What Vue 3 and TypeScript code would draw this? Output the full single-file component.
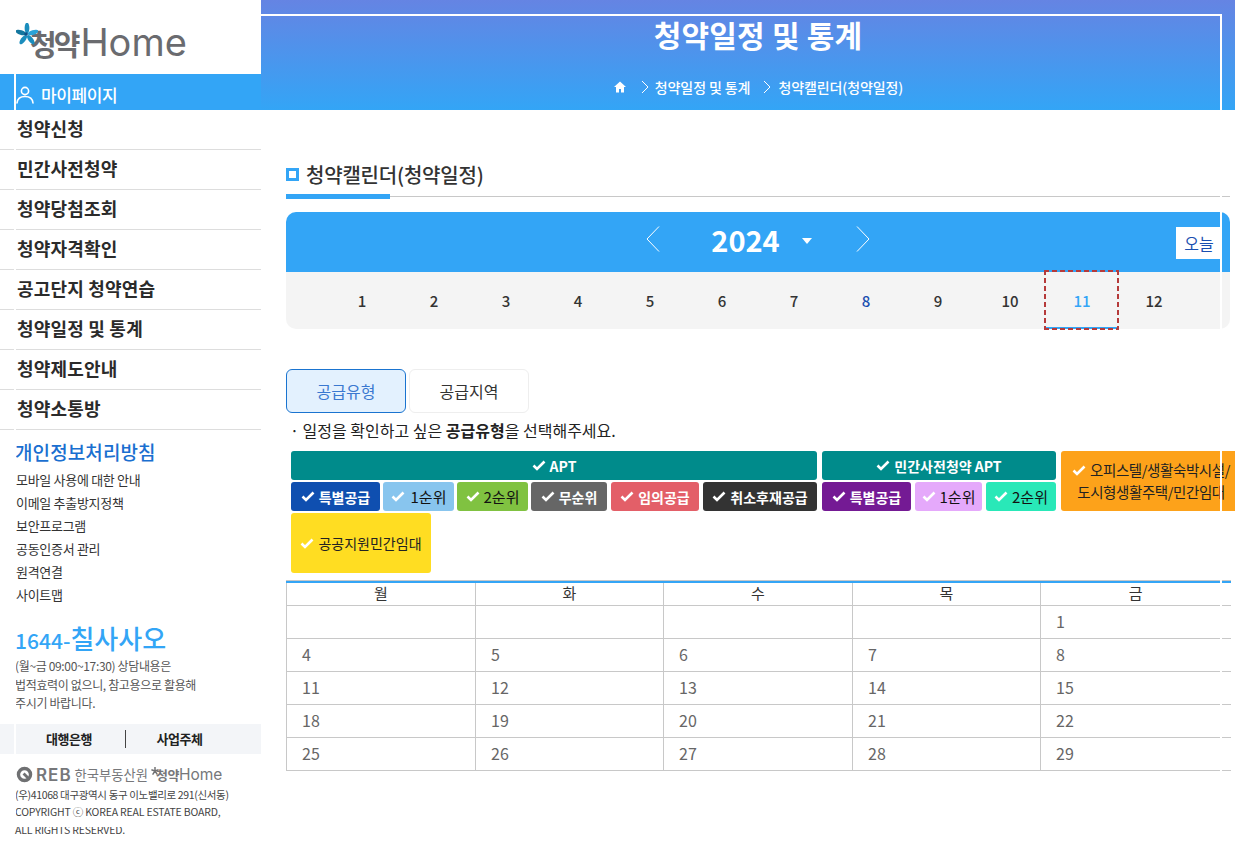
<script setup lang="ts">
interface Tag { label: string; cls: string }
const menu: string[] = ['청약신청', '민간사전청약', '청약당첨조회', '청약자격확인', '공고단지 청약연습', '청약일정 및 통계', '청약제도안내', '청약소통방']
const links: string[] = ['모바일 사용에 대한 안내', '이메일 추출방지정책', '보안프로그램', '공동인증서 관리', '원격연결', '사이트맵']
const months: number[] = [1, 2, 3, 4, 5, 6, 7, 8, 9, 10, 11, 12]
const aptTags: Tag[] = [
  { label: '특별공급', cls: 'c-blue w1' },
  { label: '1순위', cls: 'c-sky w2' },
  { label: '2순위', cls: 'c-green w2' },
  { label: '무순위', cls: 'c-gray w3' },
  { label: '임의공급', cls: 'c-red w4 mg' },
  { label: '취소후재공급', cls: 'c-dark w5 mg' }
]
const preTags: Tag[] = [
  { label: '특별공급', cls: 'c-purple w1' },
  { label: '1순위', cls: 'c-pink w6' },
  { label: '2순위', cls: 'c-mint w7' }
]
const days: string[] = ['월', '화', '수', '목', '금']
const rows: string[][] = [
  ['', '', '', '', '1'],
  ['4', '5', '6', '7', '8'],
  ['11', '12', '13', '14', '15'],
  ['18', '19', '20', '21', '22'],
  ['25', '26', '27', '28', '29']
]
</script>

<template>
  <div class="page">
    <aside class="side">
      <div class="logo">
        <svg class="star" viewBox="0 0 24 24" width="22" height="22">
          <g fill="#1b8dbd">
            <ellipse cx="12" cy="5.500" rx="2.600" ry="6" />
            <ellipse cx="12" cy="5.500" rx="2.600" ry="6" transform="rotate(72 12 12.500)" fill="#2aa3d8" />
            <ellipse cx="12" cy="5.500" rx="2.600" ry="6" transform="rotate(144 12 12.500)" />
            <ellipse cx="12" cy="5.500" rx="2.600" ry="6" transform="rotate(216 12 12.500)" />
            <ellipse cx="12" cy="5.500" rx="2.600" ry="6" transform="rotate(288 12 12.500)" fill="#14779f" />
          </g>
          <circle cx="11" cy="12" r="2" fill="#0f4f86" />
        </svg>
        <span class="logo-ko">청약</span><span class="logo-en">Home</span>
      </div>
      <div class="mypage">
        <svg viewBox="0 0 18 18" width="18" height="18" fill="none" stroke="#fff" stroke-width="1.600">
          <circle cx="9" cy="5" r="3.600" />
          <path d="M1 17c.4-4.400 3.600-6.500 8-6.500s7.600 2.100 8 6.500" stroke-linecap="round" />
        </svg>
        <span>마이페이지</span>
      </div>
      <ul class="menu">
        <li v-for="m in menu" :key="m">{{ m }}</li>
      </ul>
      <div class="policy">개인정보처리방침</div>
      <ul class="links">
        <li v-for="l in links" :key="l">{{ l }}</li>
      </ul>
      <div class="phone"><span class="p-num">1644-</span><span class="p-ko">칠사사오</span></div>
      <p class="note">(월~금 09:00~17:30) 상담내용은<br />법적효력이 없으니, 참고용으로 활용해<br />주시기 바랍니다.</p>
      <div class="bank">
        <span>대행은행</span>
        <i></i>
        <span>사업주체</span>
      </div>
      <div class="reb">
        <svg viewBox="0 0 18 18" width="17" height="17">
          <circle cx="9" cy="9" r="6.400" fill="none" stroke="#6f7072" stroke-width="3.600" />
          <path d="M8 8l5 5" stroke="#6f7072" stroke-width="3" />
        </svg>
        <span class="reb-en">REB</span>
        <span class="reb-ko">한국부동산원</span>
        <svg class="reb-star" viewBox="0 0 10 10" width="8" height="8">
          <path d="M5 0v5M5 5 .5 3.500M5 5l4.500-1.500M5 5 2 9.500M5 5l3 4.500" stroke="#6f7072" stroke-width="1.800" />
        </svg>
        <span class="reb-ko2">청약</span><span class="reb-home">Home</span>
      </div>
      <p class="addr">(우)41068 대구광역시 동구 이노밸리로 291(신서동)<br /><span class="latin">COPYRIGHT ⓒ KOREA REAL ESTATE BOARD,<br />ALL RIGHTS RESERVED.</span></p>
    </aside>

    <main class="main">
      <header class="hero">
        <h1>청약일정 및 통계</h1>
        <nav class="crumb">
          <svg viewBox="0 0 14 14" width="14" height="14"><path d="M7 1.500 1 7h2v5.500h3V9h2v3.500h3V7h2z" fill="#fff" /></svg>
          <svg class="gt first" viewBox="0 0 8 14" width="8" height="14"><path d="M1 1l6 6-6 6" fill="none" stroke="#fff" /></svg>
          <span>청약일정 및 통계</span>
          <svg class="gt second" viewBox="0 0 8 14" width="8" height="14"><path d="M1 1l6 6-6 6" fill="none" stroke="#fff" /></svg>
          <span>청약캘린더(청약일정)</span>
        </nav>
      </header>

      <section class="body">
        <h2 class="title"><i class="sq"></i>청약캘린더(청약일정)</h2>
        <div class="rule"><b></b></div>

        <div class="year-bar">
          <svg class="arrow" viewBox="0 0 14 26" width="14" height="26"><path d="M13 .5 1 13l12 12.500" fill="none" stroke="#fff" /></svg>
          <span class="year">2024</span>
          <i class="caret"></i>
          <svg class="arrow" viewBox="0 0 14 26" width="14" height="26"><path d="M1 .5 13 13 1 25.500" fill="none" stroke="#fff" /></svg>
          <button class="today">오늘</button>
        </div>
        <div class="months">
          <span v-for="n in months" :key="n" class="month" :class="{ sel: n === 11, eight: n === 8 }">{{ n }}</span>
        </div>

        <div class="tabs">
          <button class="tab on">공급유형</button>
          <button class="tab">공급지역</button>
        </div>
        <p class="guide">· 일정을 확인하고 싶은 <b>공급유형</b>을 선택해주세요.</p>

        <div class="tags">
          <div class="group g1">
            <div class="tag head"><svg class="ck" viewBox="0 0 14 11" width="14" height="11"><path d="M1.500 5.500 5 9l7.500-7.500" /></svg>APT</div>
            <div class="sub">
              <div v-for="t in aptTags" :key="t.label" class="tag" :class="t.cls"><svg class="ck" viewBox="0 0 14 11" width="14" height="11"><path d="M1.500 5.500 5 9l7.500-7.500" /></svg>{{ t.label }}</div>
            </div>
          </div>
          <div class="group g2">
            <div class="tag head"><svg class="ck" viewBox="0 0 14 11" width="14" height="11"><path d="M1.500 5.500 5 9l7.500-7.500" /></svg>민간사전청약 APT</div>
            <div class="sub">
              <div v-for="t in preTags" :key="t.label" class="tag" :class="t.cls"><svg class="ck" viewBox="0 0 14 11" width="14" height="11"><path d="M1.500 5.500 5 9l7.500-7.500" /></svg>{{ t.label }}</div>
            </div>
          </div>
          <div class="tag orange"><span><svg class="ck" viewBox="0 0 14 11" width="14" height="11"><path d="M1.500 5.500 5 9l7.500-7.500" /></svg>오피스텔/생활숙박시설/<br />도시형생활주택/민간임대</span></div>
        </div>
        <div class="tag yellow"><svg class="ck" viewBox="0 0 14 11" width="14" height="11"><path d="M1.500 5.500 5 9l7.500-7.500" /></svg>공공지원민간임대</div>

        <table class="cal">
          <thead>
            <tr><th v-for="d in days" :key="d">{{ d }}</th></tr>
          </thead>
          <tbody>
            <tr v-for="(r, i) in rows" :key="i">
              <td v-for="(c, j) in r" :key="j">{{ c }}</td>
            </tr>
          </tbody>
        </table>
      </section>
    </main>

    <div class="frame"></div>
  </div>
</template>

<style>
html, body { margin: 0; padding: 0; background: #fff; overflow: hidden; }
</style>

<style scoped>
.page {
  position: relative;
  display: flex;
  width: 1235px;
  height: 843px;
  overflow: hidden;
  background: #fff;
  color: #222;
  font-family: "Noto Sans CJK KR", "Noto Sans", sans-serif;
}
ul { list-style: none; margin: 0; padding: 0; }
p, h1, h2 { margin: 0; }

.side { width: 261px; flex: none; }
.logo { height: 74px; position: relative; display: flex; align-items: baseline; padding: 20px 0 0 30px; box-sizing: border-box; color: #6a6b6f; }
.star { position: absolute; left: 16px; top: 23px; }
.logo-ko { font-size: 29px; line-height: 44px; font-weight: 700; letter-spacing: -3px; margin-right: 3px; }
.logo-en { font-family: "Inter", sans-serif; font-size: 38px; line-height: 44px; }

.mypage { height: 36px; background: #33a5f6; color: #fff; display: flex; align-items: center; gap: 7px; padding: 5px 0 0 16px; box-sizing: border-box; font-size: 17px; font-weight: 500; letter-spacing: -.4px; }

.menu li { height: 40px; line-height: 37px; box-sizing: border-box; border-bottom: 1px solid #ddd; padding-left: 17px; font-size: 18px; font-weight: 700; letter-spacing: .2px; color: #2b2b2b; }

.policy { margin: 10px 0 0 15px; font-size: 19px; line-height: 24px; font-weight: 500; color: #1a6fd0; letter-spacing: .1px; }
.links { margin: 4px 0 0 16px; }
.links li { height: 23px; line-height: 23px; font-size: 13px; letter-spacing: -.3px; color: #333; }

.phone { margin: 16px 0 0 15px; color: #33a5f6; line-height: 32px; display: flex; align-items: baseline; font-weight: 500; }
.p-num { font-size: 21px; }
.p-ko { font-size: 26px; }
.note { margin: 1px 0 0 15px; font-size: 12px; line-height: 18.500px; color: #555; letter-spacing: -.35px; }

.bank { margin-top: 11px; height: 30px; background: #f3f5f8; display: flex; align-items: center; padding-left: 16px; font-size: 13px; font-weight: 700; letter-spacing: -.4px; color: #222; }
.bank span { width: 106px; text-align: center; }
.bank i { width: 1px; height: 18px; background: #444; margin-left: 3px; }
.bank span:last-child { width: 105px; margin-left: 1px; }

.reb { margin: 12px 0 0 16px; height: 18px; display: flex; align-items: center; color: #76777a; }
.reb-en { font-family: "Inter", sans-serif; font-size: 17px; letter-spacing: 1px; font-weight: 600; margin-left: 3px; }
.reb-ko { font-size: 13.300px; margin-left: 3px; }
.reb-star { margin: 0 -3px 8px 3px; flex: none; }
.reb-ko2 { font-size: 13px; font-weight: 700; letter-spacing: -.5px; }
.reb-home { font-family: "Inter", sans-serif; font-size: 15.500px; }

.addr { margin: 2px 0 0 15px; font-size: 10.500px; line-height: 17.500px; letter-spacing: -.35px; color: #444; white-space: nowrap; }
.latin { letter-spacing: -.18px; }

.main { flex: 1; min-width: 0; }
.hero { height: 110px; background: linear-gradient(#6584e3, #33a5f6); color: #fff; text-align: center; box-sizing: border-box; padding: 14px 0 0 20px; }
.hero h1 { font-size: 30px; line-height: 40px; font-weight: 700; letter-spacing: .2px; }
.crumb { margin-top: 23px; display: flex; justify-content: center; align-items: center; font-size: 14px; font-weight: 500; line-height: 20px; letter-spacing: -.1px; }
.gt.first { margin: 0 6px 0 14px; }
.gt.second { margin: 0 7px 0 13px; }

.body { padding: 0 5px 0 25px; }
.title { margin-top: 48px; height: 32px; display: flex; align-items: center; font-size: 20px; font-weight: 500; letter-spacing: -.2px; color: #333; }
.sq { width: 7px; height: 7px; border: 3px solid #33a5f6; margin-right: 7px; flex: none; }
.rule { margin-top: 4px; height: 5px; position: relative; }
.rule::before { content: ""; position: absolute; left: 0; right: 0; top: 2px; height: 1px; background: #c8c8c8; }
.rule b { position: absolute; left: 0; top: 0; width: 104px; height: 5px; background: #33a5f6; }

.year-bar { margin-top: 13px; height: 60px; background: #33a5f6; border-radius: 10px 10px 0 0; display: flex; align-items: center; justify-content: center; position: relative; color: #fff; padding-bottom: 6px; box-sizing: border-box; }
.year { font-size: 29px; font-weight: 700; line-height: 40px; margin: 0 0 0 51px; }
.caret { width: 0; height: 0; border: 5.500px solid transparent; border-top: 6px solid #fff; border-bottom: 0; margin: 4px 44px 0 22px; }
.arrow { flex: none; }
.today { position: absolute; left: 890px; top: 15px; width: 46px; height: 32px; border: 0; background: #fff; color: #1a4fb0; font: 400 16px "Noto Sans CJK KR", sans-serif; padding: 0; }

.months { height: 57px; background: #f4f4f4; border-radius: 0 0 10px 10px; display: flex; justify-content: center; }
.month { width: 72px; text-align: center; font-size: 15px; font-weight: 500; line-height: 58px; color: #333; position: relative; box-sizing: border-box; }
.month.eight { color: #1a4fb0; }
.month.sel { color: #33a5f6; border-bottom: 2px solid #33a5f6; }
.month.sel::after {
  content: "";
  position: absolute;
  left: -2px;
  right: -1px;
  top: -2px;
  bottom: -3px;
  background:
    repeating-linear-gradient(90deg, #b53a3a 0 5px, transparent 5px 8px) left top / 100% 2px no-repeat,
    repeating-linear-gradient(90deg, #b53a3a 0 5px, transparent 5px 8px) left bottom / 100% 2px no-repeat,
    repeating-linear-gradient(180deg, #b53a3a 0 5px, transparent 5px 8px) left top / 2px 100% no-repeat,
    repeating-linear-gradient(180deg, #b53a3a 0 5px, transparent 5px 8px) right top / 2px 100% no-repeat;
}

.tabs { margin-top: 40px; display: flex; gap: 3px; }
.tab { width: 120px; height: 44px; background: #fff; border: 1px solid #eee; border-radius: 6px; font: 400 16px "Noto Sans CJK KR", sans-serif; color: #333; padding: 0; }
.tab.on { background: #e3f1fe; border-color: #1a74d0; color: #3a78d0; }
.guide { margin: 6px 0 0 4px; font-size: 16px; line-height: 22px; color: #222; }
.guide b { font-weight: 700; }

.tags { margin: 10px -5px 0 5px; display: flex; gap: 5px; }
.group { display: flex; flex-direction: column; gap: 2px; flex: none; }
.g1 { width: 526px; }
.g2 { width: 234px; }
.sub { display: flex; gap: 3px; }
.tag { height: 29px; border-radius: 3px; display: flex; align-items: center; justify-content: center; font-size: 14px; font-weight: 700; color: #fff; white-space: nowrap; box-sizing: border-box; flex: none; }
.ck { fill: none; stroke: #fff; stroke-width: 2.600; margin-right: 4px; flex: none; }
.c-sky .ck { margin-right: 6px; }
.head { background: #008b8b; }
.w1 { width: 89px; }
.w2 { width: 71px; }
.w3 { width: 76px; }
.w4 { width: 88px; }
.w5 { width: 114px; }
.w6 { width: 67px; }
.w7 { width: 70px; }
.mg { margin-left: 1px; }
.g2 .w1 + .w6 { margin-left: 1px; }
.g2 .w6 + .w7 { margin-left: 1px; }
.c-blue { background: #0f4fb0; }
.c-sky { background: #88c5ee; color: #111; font-weight: 400; font-size: 15px; }
.c-green { background: #80c241; color: #111; font-weight: 400; font-size: 15px; }
.c-gray { background: #666; }
.c-red { background: #e35f68; }
.c-dark { background: #333; }
.c-purple { background: #741a94; }
.c-pink { background: #e5a9fb; color: #111; font-weight: 400; font-size: 15px; }
.c-mint { background: #29e8b8; color: #111; font-weight: 400; font-size: 15px; }
.orange { background: #fda21a; color: #222; font-weight: 400; width: 180px; height: 60px; text-align: center; font-size: 14.500px; line-height: 22px; letter-spacing: -.4px; }
.yellow { margin: 2px 0 0 5px; width: 140px; height: 60px; background: #ffdd22; color: #222; font-weight: 400; }

.cal { margin-top: 8px; width: 944px; border-collapse: collapse; table-layout: fixed; border-top: 2px solid #33a5f6; box-shadow: 0 -1px 0 #c8c8c8; }
.cal th, .cal td { border: 1px solid #c8c8c8; box-sizing: border-box; }
.cal th:nth-child(odd) { width: 189px; }
.cal th:nth-child(even) { width: 188px; }
.cal th:last-child, .cal td:last-child { border-right: 0; width: 190px; }
.cal thead th { border-top: 0; height: 23px; padding: 0 0 2px; font-size: 15px; font-weight: 400; line-height: 20px; color: #333; }
.cal td { height: 33px; padding: 0 0 2px 15px; font-size: 16px; line-height: 24px; color: #666; }

.frame { position: absolute; left: 14px; top: 14px; width: 1208px; height: 813px; box-sizing: border-box; border: 2px solid #fff; pointer-events: none; }
</style>
